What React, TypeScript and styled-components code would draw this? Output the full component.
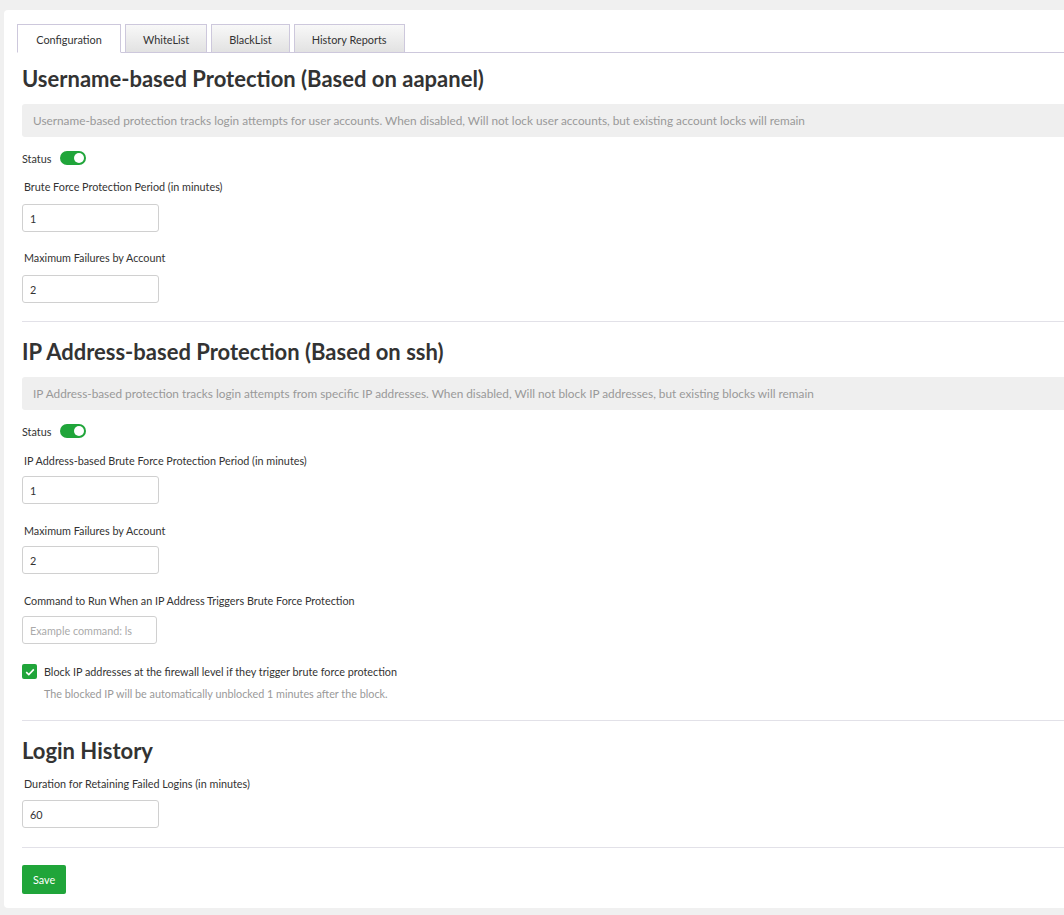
import React from "react";
import styled, { createGlobalStyle } from "styled-components";

const Global = createGlobalStyle`
  html, body { margin: 0; padding: 0; background: #f0f0f0; overflow: hidden; }
  body { font-family: "Segoe UI", Lato, "Noto Sans", sans-serif; color: #333; font-size: 10.8px; }
  * { box-sizing: border-box; }
`;

const Page = styled.div`
  padding: 10px 0 0 4px;
  width: 1064px;
  height: 915px;
`;

const Card = styled.div`
  background: #fff;
  border-radius: 4px;
  width: 1100px;
  padding: 14px 0 14px 0;
`;

const TabBar = styled.div`
  display: flex;
  gap: 4px;
  margin-left: 13px;
  border-bottom: 1px solid #cdc8dc;
  height: 29px;
`;

const Tab = styled.div<{ $active?: boolean }>`
  height: 29px;
  padding: 1px 17px 0;
  display: flex;
  align-items: center;
  justify-content: center;
  font-size: 10.9px;
  color: #333;
  border: 1px solid #cdc8dc;
  border-bottom: ${(p) => (p.$active ? "1px solid #fff" : "1px solid #cdc8dc")};
  background: ${(p) => (p.$active ? "#fff" : "linear-gradient(#f8f8f8, #e2e2e2)")};
  min-width: ${(p) => (p.$active ? "104px" : "auto")};
`;

const Body = styled.div`
  padding: 0 0 0 18px;
`;

const Heading = styled.h2<{ $top: number; $bottom?: number }>`
  margin: ${(p) => p.$top}px 0 ${(p) => p.$bottom ?? 10}px 0;
  font-size: 22px;
  line-height: 30px;
  font-weight: 700;
  color: #333;
`;

const Notice = styled.div`
  background: #efefef;
  border-radius: 3px;
  height: 33px;
  line-height: 33px;
  padding: 0 11px;
  color: #999;
  font-size: 11.8px;
  white-space: nowrap;
`;

const StatusRow = styled.div<{ $top: number }>`
  display: flex;
  align-items: center;
  gap: 9px;
  height: 20px;
  margin-top: ${(p) => p.$top}px;
  font-size: 10.8px;
`;

const Toggle = styled.span`
  position: relative;
  display: inline-block;
  width: 26px;
  height: 14px;
  border-radius: 7px;
  background: #20a53a;
  &::after {
    content: "";
    position: absolute;
    right: 2px;
    top: 2px;
    width: 10px;
    height: 10px;
    border-radius: 50%;
    background: #fff;
  }
`;

const Field = styled.div<{ $top: number; $gap: number }>`
  margin-top: ${(p) => p.$top}px;
  display: flex;
  flex-direction: column;
  gap: ${(p) => p.$gap}px;
`;

const Label = styled.label`
  display: block;
  padding-left: 2px;
  height: 18px;
  line-height: 18px;
  font-size: 10.8px;
  color: #333;
`;

const Input = styled.input<{ $w?: number }>`
  width: ${(p) => p.$w ?? 137}px;
  height: 28px;
  border: 1px solid #d0d0d0;
  border-radius: 3px;
  padding: 0 7px;
  font-family: inherit;
  font-size: 10.8px;
  color: #333;
  outline: none;
  &::placeholder { color: #aaa; }
`;

const Divider = styled.hr<{ $top: number }>`
  margin: ${(p) => p.$top}px 0 0 0;
  border: 0;
  border-top: 1px solid #e2e1e8;
  height: 0;
`;

const CheckRow = styled.div`
  margin-top: 20px;
  display: flex;
  align-items: center;
  gap: 7px;
  height: 15px;
  font-size: 10.8px;
`;

const Check = styled.span`
  width: 15px;
  height: 15px;
  border-radius: 2px;
  background: #20a53a;
  display: inline-flex;
  align-items: center;
  justify-content: center;
`;

const Help = styled.div`
  margin-top: 7px;
  padding-left: 22px;
  color: #999;
  font-size: 10.8px;
  line-height: 16px;
`;

const SaveButton = styled.button`
  margin-top: 17px;
  height: 29px;
  width: 44px;
  border: 0;
  border-radius: 2px;
  background: #20a53a;
  color: #fff;
  font-family: inherit;
  font-size: 10.8px;
  padding: 0;
`;

export default function App() {
  return (
    <>
      <Global />
      <Page>
        <Card>
          <TabBar>
            <Tab $active>Configuration</Tab>
            <Tab>WhiteList</Tab>
            <Tab>BlackList</Tab>
            <Tab>History Reports</Tab>
          </TabBar>
          <Body>
            <Heading $top={11}>Username-based Protection (Based on aapanel)</Heading>
            <Notice>
              Username-based protection tracks login attempts for user accounts. When disabled, Will not lock user
              accounts, but existing account locks will remain
            </Notice>
            <StatusRow $top={11}>
              <span>Status</span>
              <Toggle />
            </StatusRow>
            <Field $top={10} $gap={8}>
              <Label>Brute Force Protection Period (in minutes)</Label>
              <Input defaultValue="1" />
            </Field>
            <Field $top={17} $gap={8}>
              <Label>Maximum Failures by Account</Label>
              <Input defaultValue="2" />
            </Field>
            <Divider $top={18} />

            <Heading $top={15}>IP Address-based Protection (Based on ssh)</Heading>
            <Notice>
              IP Address-based protection tracks login attempts from specific IP addresses. When disabled, Will not
              block IP addresses, but existing blocks will remain
            </Notice>
            <StatusRow $top={11}>
              <span>Status</span>
              <Toggle />
            </StatusRow>
            <Field $top={11} $gap={6}>
              <Label>IP Address-based Brute Force Protection Period (in minutes)</Label>
              <Input defaultValue="1" />
            </Field>
            <Field $top={18} $gap={6}>
              <Label>Maximum Failures by Account</Label>
              <Input defaultValue="2" />
            </Field>
            <Field $top={18} $gap={6}>
              <Label>Command to Run When an IP Address Triggers Brute Force Protection</Label>
              <Input $w={135} placeholder="Example command: ls" />
            </Field>
            <CheckRow>
              <Check>
                <svg width="10" height="8" viewBox="0 0 10 8">
                  <path d="M1.2 4.2 L3.8 6.6 L8.8 1.4" stroke="#fff" strokeWidth="1.6" fill="none" />
                </svg>
              </Check>
              <span>Block IP addresses at the firewall level if they trigger brute force protection</span>
            </CheckRow>
            <Help>The blocked IP will be automatically unblocked 1 minutes after the block.</Help>
            <Divider $top={18} />

            <Heading $top={15} $bottom={9}>Login History</Heading>
            <Field $top={0} $gap={7}>
              <Label>Duration for Retaining Failed Logins (in minutes)</Label>
              <Input defaultValue="60" />
            </Field>
            <Divider $top={19} />
            <SaveButton>Save</SaveButton>
          </Body>
        </Card>
      </Page>
    </>
  );
}
